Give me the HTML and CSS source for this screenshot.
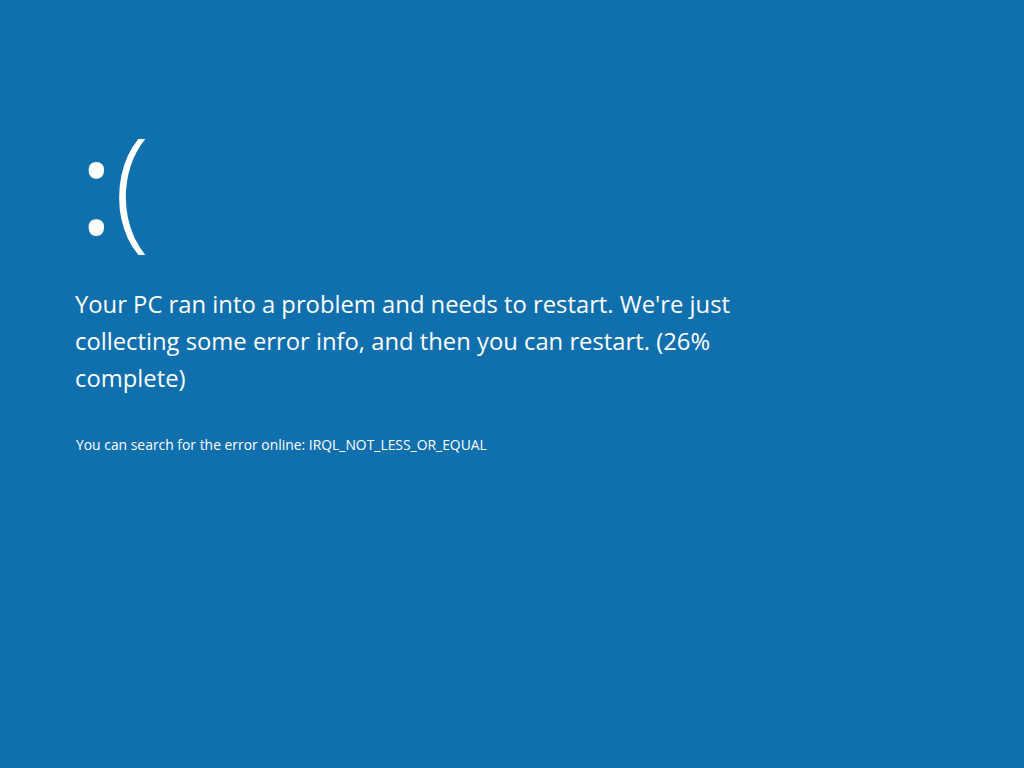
FILE: index.html
```html
<!DOCTYPE html>
<html>
<head>
<meta charset="utf-8">
<link rel="stylesheet" href="styles.css">
</head>
<body>
<main class="screen">
  <div class="face"><span class="colon">:</span>(</div>
  <p class="message">Your PC ran into a problem and needs to restart. We're just<br>collecting some error info, and then you can restart. (26%<br>complete)</p>
  <p class="search">You can search for the error online: IRQL_NOT_LESS_OR_EQUAL</p>
</main>
</body>
</html>
```
FILE: styles.css
```css
html, body {
  margin: 0;
  padding: 0;
  width: 1024px;
  height: 768px;
  background: #106fad;
  overflow: hidden;
}
.screen {
  box-sizing: border-box;
  width: 1024px;
  height: 768px;
  padding: 118px 0 0 75px;
  color: #ffffff;
  font-family: "Open Sans", "Noto Sans", sans-serif;
}
.face {
  font-size: 132px;
  font-weight: 300;
  line-height: 160px;
  height: 160px;
  margin: -15px 0 0 4px;
}
.colon {
  font-weight: 400;
  margin-right: 0;
}
.message {
  font-size: 23.8px;
  line-height: 37px;
  margin: 23px 0 0 0;
  font-weight: 400;
}
.search {
  font-size: 13.9px;
  line-height: 20px;
  margin: 38px 0 0 1px;
}
```
